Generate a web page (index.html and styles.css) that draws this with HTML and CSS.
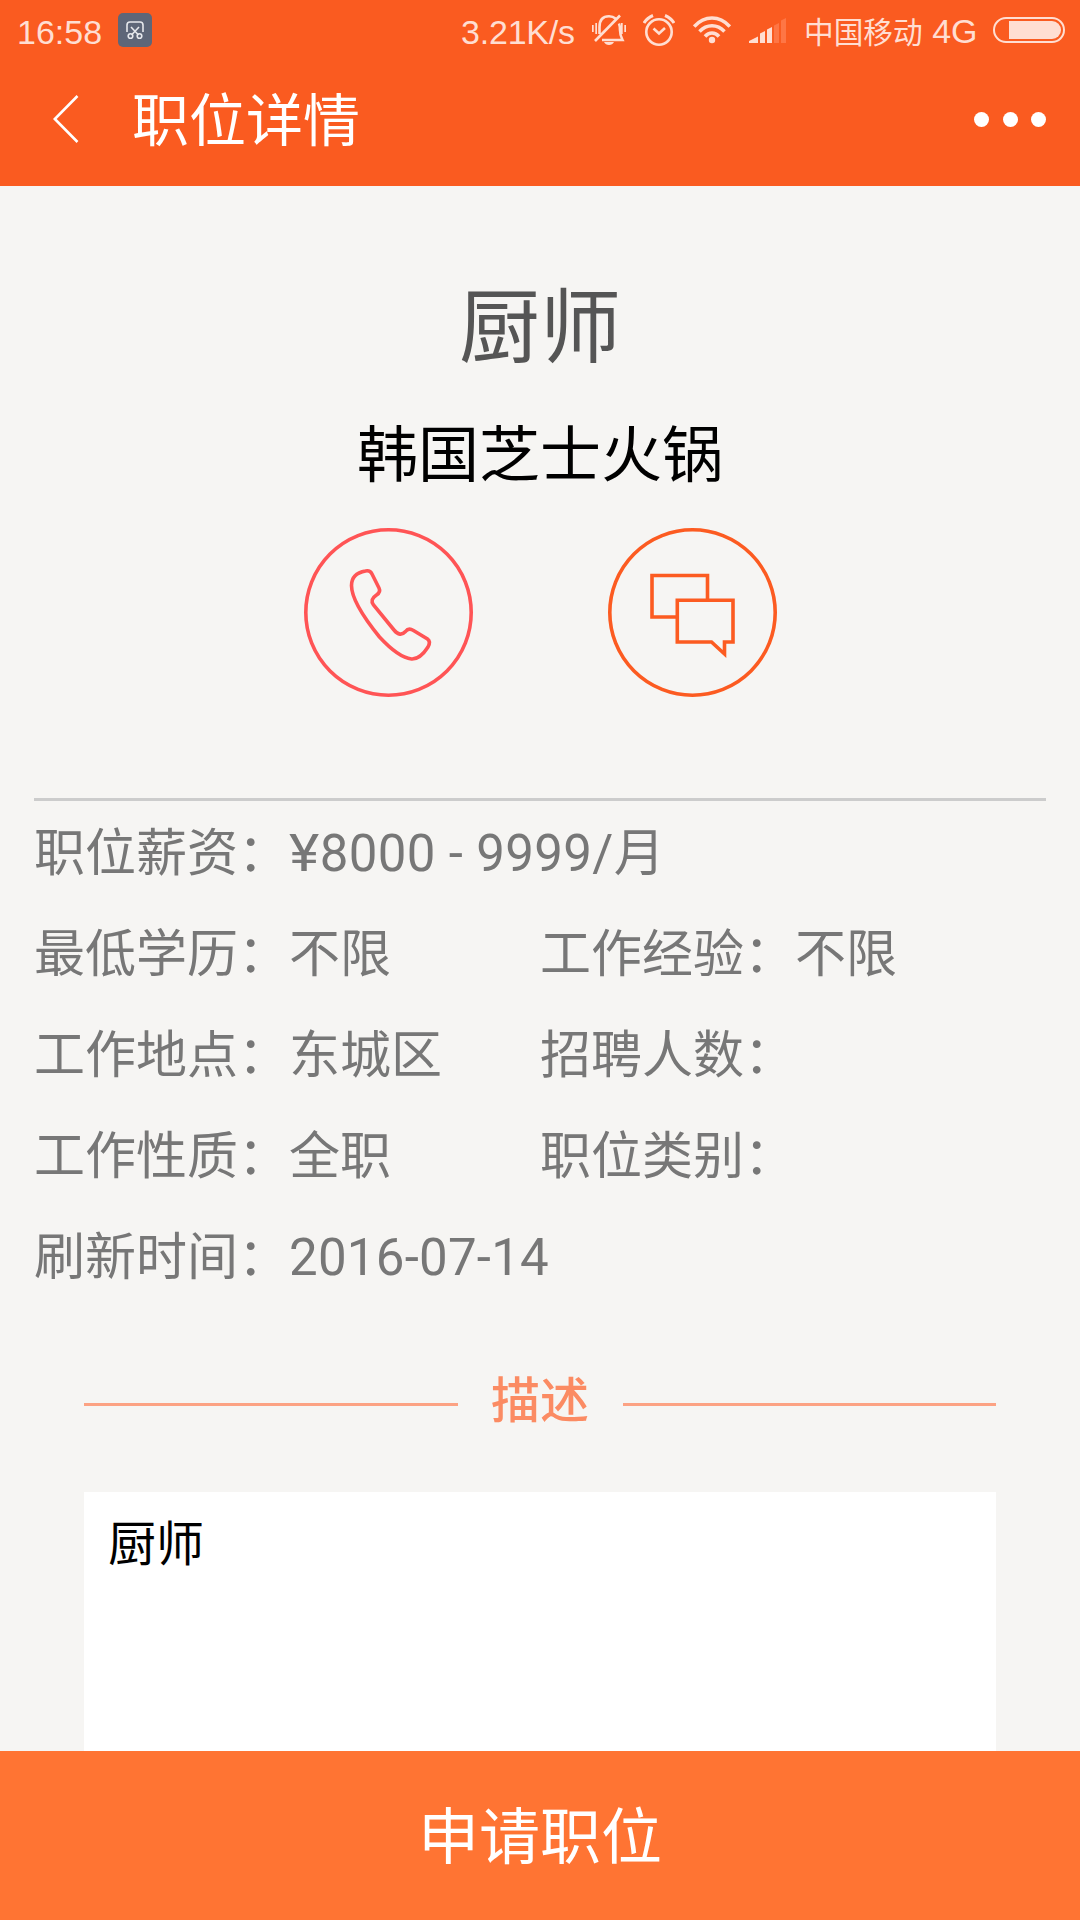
FILE: index.html
```html
<!DOCTYPE html>
<html lang="zh-CN">

<head>
   <meta charset="UTF-8">
   <meta name="viewport" content="width=device-width, initial-scale=1.0">
   <title>职位详情</title>

   <link rel="stylesheet" href="styles.css">
</head>

<body>
   <div class="app">
      <div class="header">
         <div class="status">
            <div class="status__time">16:58</div>
            <svg class="status__shot" width="34" height="34" viewBox="0 0 34 34">
               <rect width="34" height="34" rx="5" fill="#5e6678" />
               <g fill="none" stroke="#e6e8ec" stroke-width="1.6">
                  <path d="M9 19V12Q9 9 12 9H22Q25 9 25 12V19M13 14L20.5 22M21 14L13.5 22" />
                  <circle cx="12.5" cy="23" r="2.3" />
                  <circle cx="21.5" cy="23" r="2.3" />
               </g>
            </svg>

            <div class="status__speed">3.21K/s</div>
            <svg class="status__mute" width="34" height="32" viewBox="0 0 34 32">
               <g fill="none" stroke="#ffded2" stroke-width="2.6">
                  <path d="M7.500 20V13Q7.500 2.200 17 2.200Q21 2.200 23.500 4.500M27 9.500Q28 12 28 16Q28 21 30.500 26H10M3 27L28 1.500" />
               </g>
               <path d="M12 28H22Q20.500 31 17 31Q13.500 31 12 28ZM0 11H1.700V18H0ZM3.300 9H5V20H3.300ZM29 9H30.700V20H29ZM32.300 11H34V18H32.300Z" fill="#ffded2" />
            </svg>
            <svg class="status__alarm" width="32" height="32" viewBox="0 0 32 32">
               <g fill="none" stroke="#ffded2" stroke-width="2.6">
                  <circle cx="16" cy="18" r="12.700" />
                  <path d="M10.500 14.500L16 19.500L22 14" />
                  <path d="M1 9Q4 4 10 1.500M31 9Q28 4 22 1.500" stroke-width="3" />
               </g>
            </svg>
            <svg class="status__wifi" width="38" height="28" viewBox="0 0 38 28">
               <g fill="none" stroke="#ffded2" stroke-width="3.500">
                  <path d="M1.200 10.500Q9 2 19 2Q29 2 36.800 10.500M6.500 15.500Q12 9.700 19 9.700Q26 9.700 31.500 15.500M12 20.500Q15 17 19 17Q23 17 26 20.500" />
               </g>
               <circle cx="19" cy="24" r="3.200" fill="#ffded2" />
            </svg>
            <svg class="status__signal" width="37" height="25" viewBox="0 0 37 25">
               <path d="M0 25V23L9 18.500V25ZM11 25V15.500L16 13V25ZM18 25V11.500L23 9V25Z" fill="#ffded2" />
               <path d="M25 25V7.500L30 5V25ZM32 25V2.500L37 0V25Z" fill="#fe7645" />
            </svg>
            <div class="status__carrier"><span class="carrier__name">中国移动</span> 4G</div>
            <div class="battery">
               <div class="battery__level"></div>
            </div>
         </div>

         <div class="nav">
            <svg class="nav__back" width="26" height="48" viewBox="0 0 26 48">
               <path d="M24.500 1L1.800 24L24.500 47" fill="none" stroke="#fff" stroke-width="2.600" />
            </svg>
            <div class="nav__title">职位详情</div>
            <div class="nav__more">
               <span class="dot"></span>
               <span class="dot"></span>
               <span class="dot"></span>
            </div>
         </div>
      </div>

      <div class="content">
         <div class="job__title">厨师</div>
         <div class="job__company">韩国芝士火锅</div>

         <div class="contact">
            <svg width="169" height="169" viewBox="0.5 0.5 169 169" fill="none" stroke="#ff5455" stroke-width="3.600">
               <circle cx="85" cy="85" r="82.700" />
               <path d="M62 43.500Q66.500 42.500 68.500 46.500L75.500 60.500Q77.500 64.500 73 67.500Q66 72 70 77.500L90.500 102.500Q96.500 110 102 104Q105 100 110 103L124 111.500Q127.500 114 124.500 119.500Q116.500 132 108 131.500Q95 130 76 109.500Q48 75 48 58Q48 46 62 43.500Z" />
            </svg>
            <svg width="169" height="169" viewBox="0.5 0.5 169 169" fill="none" stroke="#fc5b21" stroke-width="3.600">
               <circle cx="85" cy="85" r="82.700" />
               <path d="M70 89.500H44.500V48H100V73" />
               <path d="M69.800 72.800H125.500V114.500H117V126.500L104 114.500H69.800Z" />
            </svg>
         </div>

         <div class="info">
            <div class="info__row">
               <div class="info__item">职位薪资：<span class="yen">¥</span><span class="salary">8000 - 9999/</span>月</div>
            </div>
            <div class="info__row">
               <div class="info__item">最低学历：不限</div>
               <div class="info__item">工作经验：不限</div>
            </div>
            <div class="info__row">
               <div class="info__item">工作地点：东城区</div>
               <div class="info__item">招聘人数：</div>
            </div>
            <div class="info__row">
               <div class="info__item">工作性质：全职</div>
               <div class="info__item">职位类别：</div>
            </div>
            <div class="info__row">
               <div class="info__item">刷新时间：<span class="date">2016-07-14</span></div>
            </div>
         </div>

         <div class="section">
            <div class="section__line"></div>
            <div class="section__title">描述</div>
            <div class="section__line"></div>
         </div>

         <div class="description">厨师</div>
      </div>

      <div class="apply__button">申请职位</div>
   </div>
</body>

</html>
```
FILE: styles.css
```css
* {
   box-sizing: border-box;
   padding: 0;
   margin: 0;
}

body {
   background-color: #f6f5f3;
   font-family: Roboto, 'Noto Sans CJK SC', sans-serif;
}

svg {
   display: block;
   flex-shrink: 0;
}

.app {
   display: flex;
   flex-direction: column;
   width: 1080px;
   height: 1920px;
   overflow: hidden;
}

.header {
   height: 186px;
   flex-shrink: 0;
   background-color: #fa5b20;
   color: #fff;
}

/* status bar */
.status {
   display: flex;
   align-items: center;
   height: 60px;
   padding: 0 15px 0 17px;
   color: #ffded2;
   font-family: 'Liberation Sans', 'Noto Sans CJK SC', sans-serif;
   font-size: 34px;
   line-height: 60px;
   white-space: nowrap;
}

.status__time {
   width: 101px;
   padding-top: 3px;
}

.status__speed {
   width: 114px;
   margin-left: 309px;
   padding-top: 3px;
   letter-spacing: -.2px;
}

.status__mute {
   margin-left: 17px;
}

.status__alarm {
   margin-left: 17px;
}

.status__wifi {
   margin-left: 18px;
}

.status__signal {
   margin-left: 18px;
   margin-top: 1px;
}

.status__carrier {
   width: 174px;
   margin-left: 18px;
   padding-top: 3px;
}

.carrier__name {
   font-size: 29.7px;
}

.battery {
   width: 72px;
   height: 26px;
   margin-left: auto;
   padding: 2px 2px 2px 14px;
   border: 2px solid #ffded2;
   border-radius: 13px;
}

.battery__level {
   height: 18px;
   background-color: #ffded2;
   border-radius: 0 9px 9px 0;
}

/* title bar */
.nav {
   display: flex;
   align-items: center;
   height: 118px;
   padding: 0 34px 0 53px;
}

.nav__title {
   margin-left: 53px;
   padding-top: 6px;
   font-size: 57px;
   line-height: 112px;
}

.nav__more {
   display: flex;
   gap: 13.5px;
   margin-left: auto;
}

.dot {
   width: 15px;
   height: 15px;
   border-radius: 50%;
   background-color: #fff;
}

.content {
   flex: 1;
   min-height: 0;
   display: flex;
   flex-direction: column;
   padding: 86px 34px 0;
}

.job__title {
   height: 114px;
   line-height: 114px;
   font-size: 81px;
   text-align: center;
   color: #555;
}

.job__company {
   height: 90px;
   margin-top: 25px;
   line-height: 90px;
   font-size: 61px;
   text-align: center;
   color: #000;
}

.contact {
   display: flex;
   justify-content: center;
   gap: 135px;
   margin-top: 27px;
   padding-left: 1px;
}

.info {
   margin-top: 101px;
   padding-top: 2px;
   border-top: 3px solid #ccc;
   font-size: 51px;
   line-height: 101px;
   color: #777;
}

.info__row {
   display: flex;
   height: 101px;
}

.info__item {
   width: 50%;
   white-space: nowrap;
}

.yen {
   display: inline-block;
   margin-right: 4px;
   transform: scaleX(1.13);
   transform-origin: left;
}

.salary {
   letter-spacing: .35px;
}

.date {
   letter-spacing: .25px;
}

.section {
   display: flex;
   align-items: center;
   margin: 56px 50px 0;
   height: 80px;
}

.section__line {
   flex: 1;
   height: 3px;
   background-color: #fca283;
}

.section__title {
   width: 165px;
   height: 80px;
   font-size: 49px;
   font-weight: 500;
   line-height: 75px;
   text-align: center;
   color: #fb8b63;
}

.description {
   flex: 1;
   margin: 48px 50px 0;
   padding: 18px 24px;
   background-color: #fff;
   font-size: 48px;
   line-height: 70px;
   color: #000;
}

.apply__button {
   height: 169px;
   flex-shrink: 0;
   padding-top: 4px;
   background-color: #ff7433;
   color: #fff;
   font-size: 61px;
   line-height: 167px;
   text-align: center;
}
```
